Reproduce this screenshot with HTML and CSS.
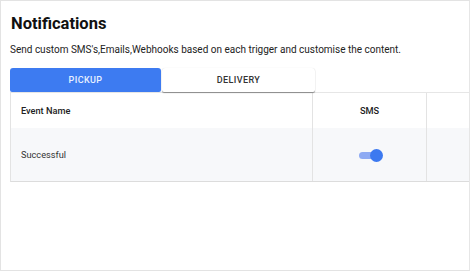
FILE: index.html
```html
<!DOCTYPE html>
<html>
<head>
<meta charset="utf-8">
<link rel="stylesheet" href="styles.css">
</head>
<body>
<div class="frame">
  <h1 class="title">Notifications</h1>
  <p class="desc">Send custom SMS's,Emails,Webhooks based on each trigger and customise the content.</p>
  <div class="tabs">
    <div class="tab tab-active">PICKUP</div>
    <div class="tab tab-idle">DELIVERY</div>
  </div>
  <div class="table-wrap">
    <div class="table">
      <div class="cell head name">Event Name</div>
      <div class="cell head center">SMS</div>
      <div class="cell head center"></div>
      <div class="cell body name">Successful</div>
      <div class="cell body center"><span class="toggle"><span class="knob"></span></span></div>
      <div class="cell body center"></div>
    </div>
  </div>
</div>
</body>
</html>
```
FILE: styles.css
```css
* { box-sizing: border-box; }
html, body { margin: 0; padding: 0; background: #fff; }
body { font-family: Roboto, "Liberation Sans", Arial, sans-serif; color: #222; }
.frame {
  width: 470px;
  height: 271px;
  border: 1px solid #e3e3e3;
  border-right-color: #e6e6e6;
  padding: 13px 0 0 9px;
  overflow: hidden;
}
.title {
  margin: 0 0 9px 1px;
  font-size: 16.5px;
  line-height: 20px;
  font-weight: 700;
  color: #111;
}
.desc {
  margin: 0 0 12px 0;
  font-size: 10px;
  line-height: 13px;
  color: #222;
}
.tabs { display: flex; gap: 1px; position: relative; z-index: 1; }
.tab {
  height: 24px;
  display: flex;
  align-items: center;
  justify-content: center;
  font-size: 9px;
  font-weight: 500;
  letter-spacing: 0.4px;
  border-radius: 3px 3px 2px 2px;
}
.tab-active { width: 151px; background: #3d7bf1; color: #e8f0ff; }
.tab-idle { width: 153px; background: #fff; color: #333; box-shadow: 0 1px 1px rgba(0,0,0,0.4), 0 0 1px rgba(0,0,0,0.12); }
.table-wrap { overflow: hidden; margin-right: -10px; }
.table {
  display: grid;
  grid-template-columns: 302px 114px 200px;
  grid-template-rows: 35px 53px;
  border-top: 1px solid #e6e6e6;
  border-left: 1px solid #e3e3e3;
  border-bottom: 1px solid #dcdcdc;
  width: 616px;
}
.cell {
  display: flex;
  align-items: center;
  font-size: 9.2px;
  border-right: 1px solid #e3e3e3;
}
.cell.head { background: #fff; font-weight: 500; color: #222; }
.cell.body { background: #f7f8fa; color: #333; }
.name { padding-left: 10px; }
.center { justify-content: center; }
.toggle {
  position: relative;
  display: block;
  width: 24px;
  height: 12px;
  margin-left: 2px;
}
.toggle::before {
  content: "";
  position: absolute;
  left: 0;
  top: 3px;
  width: 20px;
  height: 7px;
  border-radius: 4px;
  background: #8eaaf3;
}
.knob {
  position: absolute;
  right: 0;
  top: 0;
  width: 13px;
  height: 13px;
  border-radius: 50%;
  background: #3c79f0;
}
```
